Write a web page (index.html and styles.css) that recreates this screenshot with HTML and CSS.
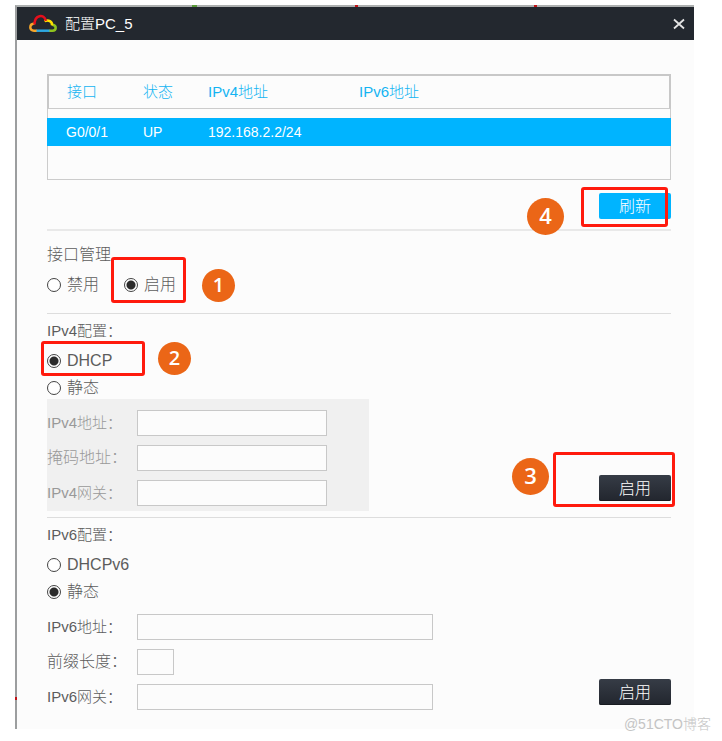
FILE: index.html
```html
<!DOCTYPE html>
<html lang="zh-CN">
<head>
<meta charset="utf-8">
<title>配置PC_5</title>
<link rel="stylesheet" href="styles.css">
</head>
<body>
<main class="window">
  <i class="wire wire-green"></i><i class="wire wire-red-a"></i><i class="wire wire-red-b"></i><i class="wire wire-side"></i>
  <header class="titlebar">
    <svg class="logo" viewBox="0 0 30 20" fill="none" stroke-width="2.500" aria-hidden="true">
      <path d="M9 16.700H6C1 16.700 1 9.800 6.500 9.500" stroke="#f5a52a"/>
      <path d="M24.500 10.800C29 11.500 28.500 16.700 24.500 16.700H21" stroke="#8fc31f"/>
      <path d="M8.500 16.700H21.500" stroke="#2ea7e0"/>
      <path d="M16.500 7.200C20.500 5.200 24.500 7.500 24 11.500" stroke="#ffe100"/>
      <path d="M6.500 10.500C6.500 0.500 16 -0.500 18 6.800" stroke="#e60f1c"/>
    </svg>
    <h1>配置PC_5</h1>
    <button class="close" type="button" aria-label="关闭">
      <svg viewBox="0 0 12 12" aria-hidden="true"><path d="M1 1.500L11 10.500M11 1.500L1 10.500" stroke="#e4e4e4" stroke-width="1.800"/></svg>
    </button>
  </header>
  <div class="content">
    <div class="table-box">
      <table>
        <colgroup><col class="c-port"><col class="c-state"><col class="c-v4"><col></colgroup>
        <thead><tr><th>接口</th><th>状态</th><th>IPv4地址</th><th>IPv6地址</th></tr></thead>
        <tbody><tr><td>G0/0/1</td><td>UP</td><td>192.168.2.2/24</td><td></td></tr></tbody>
      </table>
    </div>
    <div class="actions">
      <button class="btn btn-blue" type="button">刷新</button>
      <span class="frame frame-4"></span><span class="badge badge-lg badge-4">4</span>
    </div>

    <section class="manage">
      <h2>接口管理</h2>
      <div class="options">
        <label class="radio"><input type="radio" name="port">禁用</label>
        <label class="radio"><input type="radio" name="port" checked>启用</label>
      </div>
      <span class="frame frame-1"></span><span class="badge badge-1">1</span>
    </section>

    <section class="config">
      <h2 class="mixed">IPv4配置：</h2>
      <label class="radio"><input type="radio" name="v4" checked>DHCP</label>
      <label class="radio"><input type="radio" name="v4">静态</label>
      <div class="form-row">
        <div class="fields disabled">
          <label class="mixed" for="v4addr">IPv4地址：</label><input id="v4addr" type="text" disabled>
          <label for="v4mask">掩码地址：</label><input id="v4mask" type="text" disabled>
          <label class="mixed" for="v4gw">IPv4网关：</label><input id="v4gw" type="text" disabled>
        </div>
        <button class="btn btn-dark" type="button">启用</button>
      </div>
      <span class="frame frame-2"></span><span class="badge badge-2">2</span>
      <span class="frame frame-3"></span><span class="badge badge-lg badge-3">3</span>
    </section>

    <section class="config">
      <h2 class="mixed">IPv6配置：</h2>
      <label class="radio"><input type="radio" name="v6">DHCPv6</label>
      <label class="radio"><input type="radio" name="v6" checked>静态</label>
      <div class="form-row">
        <div class="fields wide">
          <label class="mixed" for="v6addr">IPv6地址：</label><input id="v6addr" type="text">
          <label for="v6len">前缀长度：</label><input id="v6len" class="short" type="text">
          <label class="mixed" for="v6gw">IPv6网关：</label><input id="v6gw" type="text">
        </div>
        <button class="btn btn-dark" type="button">启用</button>
      </div>
    </section>
  </div>
</main>
<div class="watermark">@51CTO博客</div>
</body>
</html>
```
FILE: styles.css
```css
* { box-sizing: border-box; }
body {
  position: relative;
  margin: 0;
  padding: 5px 28px 12px 15px;
  background: #fff;
  color: #5c5c5c;
  font: 300 16px/24px "Liberation Sans", "Noto Sans CJK SC", sans-serif;
}
h1, h2 { margin: 0; font-weight: inherit; }
h2 { font-size: 16px; }
button, input { font: inherit; margin: 0; padding: 0; }

.window {
  position: relative;
  background: #fcfcfc;
  border-top: 2px solid #adb0b0;
  border-left: 2px solid #9c9e9f;
}
.titlebar {
  display: flex;
  align-items: center;
  height: 33px;
  padding: 0 9px 0 11px;
  background: #23282f;
  color: #fff;
}
.logo { width: 30px; height: 20px; margin-right: 7px; }
h1 { font-size: 15px; flex: 1; }
.close { display: flex; width: 12px; height: 12px; border: 0; background: none; }
.close svg { width: 12px; height: 12px; }

.content { padding: 34px 23px 8px 30px; }

.table-box {
  border: 1px solid #ccc;
  border-top: 0;
  padding-bottom: 33px;
}
table { width: calc(100% + 2px); margin: 0 -1px; border-spacing: 0; table-layout: fixed; text-align: left; }
.c-port { width: 77px; }
.c-state { width: 65px; }
.c-v4 { width: 151px; }
th, td { padding: 0 0 0 19px; font-weight: inherit; }
th {
  height: 35px;
  color: #14b4f2;
  font-size: 15px;
  border-top: 2px solid #c8c8c8;
  border-bottom: 1px solid #ccc;
}
th:first-child { border-left: 2px solid #c8c8c8; padding-left: 18px; }
th:last-child { border-right: 2px solid #c8c8c8; }
tbody::before { content: ""; display: block; height: 9px; }
td { height: 28px; background: #00b4ff; color: #fff; font-size: 14px; }

.btn { height: 26px; width: 72px; border: 0; border-radius: 2px; color: #fff; line-height: 28px; }
.btn-blue { background: #00b4ff; }
.btn-dark { background: linear-gradient(#363c46, #22262e); box-shadow: inset 0 -1px #181b20; margin-bottom: 10px; }
.actions { position: relative; z-index: 1; display: flex; justify-content: flex-end; padding: 13px 0 10px; }

section { position: relative; display: flex; flex-direction: column; align-items: flex-start; }
.manage { border-top: 2px solid #e9e9e9; padding: 12px 0 17px; }
.manage h2, .config h2 { margin-bottom: 7px; }
.config { border-top: 1px solid #ddd; padding: 5px 0 6px; }
.options { display: flex; gap: 25px; }
.radio { display: flex; align-items: center; gap: 6px; height: 22px; }
.radio + .radio { margin-top: 5px; }
.options .radio + .radio { margin-top: 0; }
.radio input {
  appearance: none;
  width: 14px;
  height: 14px;
  border: 1px solid #444;
  border-radius: 50%;
  background: #fff;
}
.radio input:checked { background: radial-gradient(circle, #2b2b2b 4px, #fff 5px); }

.mixed { font-size: 15px; }
.form-row { display: flex; align-self: stretch; justify-content: space-between; align-items: flex-end; }
.fields {
  display: grid;
  grid-template-columns: 90px 190px;
  gap: 9px 0;
  padding: 11px 42px 5px 0;
  line-height: 26px;
}
.fields.wide { grid-template-columns: 90px 296px; }
.disabled { background: #f0f0f0; color: #999; }
.fields input { width: 100%; height: 26px; border: 1px solid #c8c8c8; background: #fcfcfc; }
.fields input.short { width: 37px; }

.frame { position: absolute; border: 3px solid #ff1a0d; border-radius: 3px; pointer-events: none; }
.frame-1 { left: 64px; top: 26px; width: 75px; height: 46px; }
.frame-2 { left: -6px; top: 27px; width: 104px; height: 35px; }
.frame-3 { right: -4px; top: 138px; width: 122px; height: 55px; }
.frame-4 { right: 3px; top: 7px; width: 87px; height: 40px; }
.badge {
  position: absolute;
  width: 33px;
  height: 33px;
  border-radius: 50%;
  background: #eb6617;
  color: #fff;
  text-align: center;
  font: 600 20px/31px "Open Sans", sans-serif;
}
.badge-lg { width: 37px; height: 37px; font-size: 22px; line-height: 35px; }
.badge-1 { left: 155px; top: 38px; }
.badge-2 { left: 111px; top: 28px; }
.badge-3 { right: 122px; top: 144px; }
.badge-4 { right: 107px; top: 18px; }

.wire { position: absolute; top: -2px; width: 3px; height: 2px; background: #c01216; }
.wire-green { left: 175px; width: 5px; background: #5a9a3a; }
.wire-red-a { left: 338px; }
.wire-red-b { left: 517px; }
.wire-side { left: -2px; top: 690px; width: 2px; height: 3px; }

.watermark { position: absolute; right: 11px; bottom: 5px; color: #c4c4c4; font-size: 14px; }
```
